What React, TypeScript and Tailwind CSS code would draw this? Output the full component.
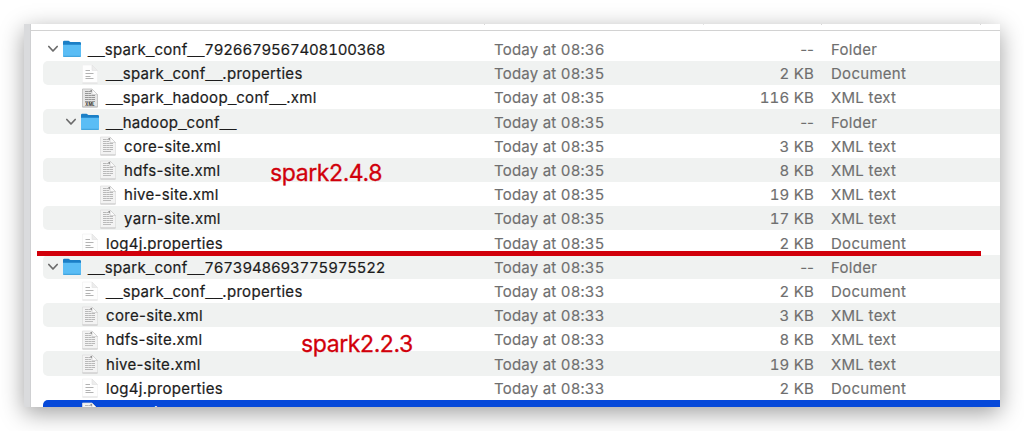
import React from "react";

type Kind = "folder" | "doc" | "xml" | "xmlbadge";
type Entry = { name: string; depth: number; kind: Kind; time: string; size: string; type: string };

const entries: Entry[] = [
  { name: "__spark_conf__7926679567408100368", depth: 0, kind: "folder", time: "08:36", size: "--", type: "Folder" },
  { name: "__spark_conf__.properties", depth: 1, kind: "doc", time: "08:35", size: "2 KB", type: "Document" },
  { name: "__spark_hadoop_conf__.xml", depth: 1, kind: "xmlbadge", time: "08:35", size: "116 KB", type: "XML text" },
  { name: "__hadoop_conf__", depth: 1, kind: "folder", time: "08:35", size: "--", type: "Folder" },
  { name: "core-site.xml", depth: 2, kind: "xml", time: "08:35", size: "3 KB", type: "XML text" },
  { name: "hdfs-site.xml", depth: 2, kind: "xml", time: "08:35", size: "8 KB", type: "XML text" },
  { name: "hive-site.xml", depth: 2, kind: "xml", time: "08:35", size: "19 KB", type: "XML text" },
  { name: "yarn-site.xml", depth: 2, kind: "xml", time: "08:35", size: "17 KB", type: "XML text" },
  { name: "log4j.properties", depth: 1, kind: "doc", time: "08:35", size: "2 KB", type: "Document" },
  { name: "__spark_conf__7673948693775975522", depth: 0, kind: "folder", time: "08:35", size: "--", type: "Folder" },
  { name: "__spark_conf__.properties", depth: 1, kind: "doc", time: "08:33", size: "2 KB", type: "Document" },
  { name: "core-site.xml", depth: 1, kind: "xml", time: "08:33", size: "3 KB", type: "XML text" },
  { name: "hdfs-site.xml", depth: 1, kind: "xml", time: "08:33", size: "8 KB", type: "XML text" },
  { name: "hive-site.xml", depth: 1, kind: "xml", time: "08:33", size: "19 KB", type: "XML text" },
  { name: "log4j.properties", depth: 1, kind: "doc", time: "08:33", size: "2 KB", type: "Document" },
];

const indents = ["pl-0", "pl-[18px]", "pl-[36px]"];

function Chevron() {
  return (
    <svg width="12" height="8" viewBox="0 0 12 8" className="shrink-0">
      <path d="M1.8 1.5 6 6 10.2 1.5" fill="none" stroke="#6b6b6b" strokeWidth="1.7" strokeLinecap="round" strokeLinejoin="round" />
    </svg>
  );
}

function FolderIcon() {
  return (
    <svg width="20" height="18" viewBox="0 0 20 18">
      <path d="M1 2Q1 .7 2.2 .7H6.6L8.4 2H17.8Q19 2 19 3.2V15.6Q19 17 17.6 17H2.4Q1 17 1 15.6Z" fill="#1b7fc6" />
      <path d="M1 4.8H19V15.6Q19 17 17.6 17H2.4Q1 17 1 15.6Z" fill="#5abdf5" />
      <path d="M1.2 15.8Q1.4 17 2.6 17H17.4Q18.6 17 18.8 15.8Z" fill="#43a5de" />
    </svg>
  );
}

function FileIcon({ kind }: { kind: Kind }) {
  const badge = kind === "xmlbadge";
  const xml = kind !== "doc";
  return (
    <svg width="20" height="20" viewBox="0 0 20 20">
      <path d="M2.5 1H12L17.5 6.5V19H2.5Z" fill={badge ? "#e6e6e6" : xml ? "#f3f3f3" : "#fefefe"} stroke={badge ? "#b5b5b5" : xml ? "#dcdcdc" : "#f1f1f1"} strokeWidth="0.7" />
      <path d="M2.5 19H17.5" stroke={xml ? "#bcbcbc" : "#d8d8d8"} strokeWidth="0.8" />
      <path d="M12 1V6.5H17.5Z" fill={xml ? "#fafafa" : "#ededed"} stroke={xml ? "#c2c2c2" : "#e0e0e0"} strokeWidth="0.6" />
      {xml && <path d="M10 2.2 12 4.4V2Z" fill="#8c8c8c" />}
      {xml ? (
        <path d="M5 3.5H11M5 5.5H11M5 7.5H15M5 9.5H15M5 11.5H15M5 13.5H15" stroke={badge ? "#979797" : "#b9b9b9"} strokeWidth="1.1" strokeDasharray="3.6 0.3 2.6 0.3" />
      ) : (
        <path d="M5.5 6.5H10M5.5 9.5H13.5M5.5 12.5H10.5M5.5 14.5H13.5" stroke="#b2b2b2" strokeWidth="1" />
      )}
      {kind === "xml" && <path d="M5 15.5H13" stroke="#bdbdbd" strokeWidth="1" />}
      {badge && <text x="10" y="17.8" textAnchor="middle" fontFamily="Inter, sans-serif" fontSize="4.2" fontWeight="700" fill="#333">XML</text>}
    </svg>
  );
}

function Name({ text }: { text: string }) {
  return (
    <span className="pt-[2px] tracking-[0.31px] text-[#1c1c1c] [-webkit-text-stroke:0.2px_#1c1c1c]">
      {text.split(/(_+|\d{5,})/).map((part, i) => {
        if (part.startsWith("_")) {
          return <span key={i} className="align-[1px] font-['Liberation_Sans',sans-serif] leading-none tracking-normal">{part}</span>;
        }
        if (/^\d{5,}$/.test(part)) {
          return <span key={i} className="tracking-[-0.2px] tabular-nums">{part}</span>;
        }
        return part;
      })}
    </span>
  );
}

function Row({ entry, striped }: { entry: Entry; striped: boolean }) {
  return (
    <div className={`flex h-[24.21px] shrink-0 items-center rounded-l-[5px] ${striped ? "bg-[#f0f2f1]" : "bg-white"}`}>
      <div className={`flex w-[451px] shrink-0 items-center ${indents[entry.depth]}`}>
        <div className="flex w-[18px] shrink-0 justify-end pr-[2px]">{entry.kind === "folder" && <Chevron />}</div>
        <div className="flex w-[27px] shrink-0 pt-[1px] pl-[1px]">
          {entry.kind === "folder" ? <FolderIcon /> : <FileIcon kind={entry.kind} />}
        </div>
        <Name text={entry.name} />
      </div>
      <span className="w-[220px] shrink-0 pt-[2px] tracking-[0.22px] text-[#6f6f6f] tabular-nums [-webkit-text-stroke:0.15px_#6f6f6f]">Today at {entry.time}</span>
      <span className={`w-[100px] shrink-0 pt-[2px] text-right text-[#6f6f6f] [-webkit-text-stroke:0.15px_#6f6f6f] ${entry.size === "--" ? "" : "tracking-[0.2px] tabular-nums"}`}>{entry.size}</span>
      <span className="pt-[2px] pl-[17px] tracking-[0.28px] text-[#6f6f6f] [-webkit-text-stroke:0.15px_#6f6f6f]">{entry.type}</span>
    </div>
  );
}

export default function App() {
  return (
    <div className="h-[431px] w-[1024px] overflow-hidden bg-white p-[24px] font-['Inter',sans-serif] text-[15px] leading-[20px] whitespace-nowrap">
      <div className="relative h-[383px] w-[976px] shadow-[0_6px_22px_rgba(0,0,0,0.38)]">
        <div className="flex h-full overflow-hidden bg-white">
          <div className="w-[7px] shrink-0 border-r border-[#cfd0d2] bg-[#dadbdd]" />
          <div className="flex min-w-0 flex-1 flex-col">
            <div className="flex h-[7px] shrink-0 border-b border-[#d2d2d2]">
              <div className="h-px w-[454px] border-r border-[#d8d8d8]" />
              <div className="h-px w-[219px] border-r border-[#e4e4e4]" />
              <div className="h-px w-[118px] border-r border-[#d8d8d8]" />
              <div className="h-px w-[159px] border-r border-[#d8d8d8]" />
            </div>
            <div className="flex flex-col pt-[5.8px] pl-[12px]">
              {entries.map((e, i) => <Row key={i} entry={e} striped={i % 2 === 1} />)}
              <div className="flex h-[24.21px] items-center rounded-l-[5px] bg-[#0649d9] text-white">
                <div className="flex w-[451px] items-center pl-[37px]">
                  <div className="w-[26px]"><FileIcon kind="xml" /></div>
                  <span className="pt-[2px] tracking-[0.28px]">yarn-site.xml</span>
                </div>
                <span className="pt-[2px] tracking-[0.22px] tabular-nums">Today at 08:33</span>
              </div>
            </div>
          </div>
        </div>
        <div className="absolute top-[227px] left-[13px] h-[5px] w-[944px] bg-[#d1000b]" />
        <span className="absolute top-[134px] left-[246px] text-[23px] leading-[30px] tracking-[-0.4px] text-[#d1000b] [-webkit-text-stroke:0.3px_#d1000b]">spark2.4.8</span>
        <span className="absolute top-[305px] left-[277px] text-[23px] leading-[30px] tracking-[-0.4px] text-[#d1000b] [-webkit-text-stroke:0.3px_#d1000b]">spark2.2.3</span>
      </div>
    </div>
  );
}
